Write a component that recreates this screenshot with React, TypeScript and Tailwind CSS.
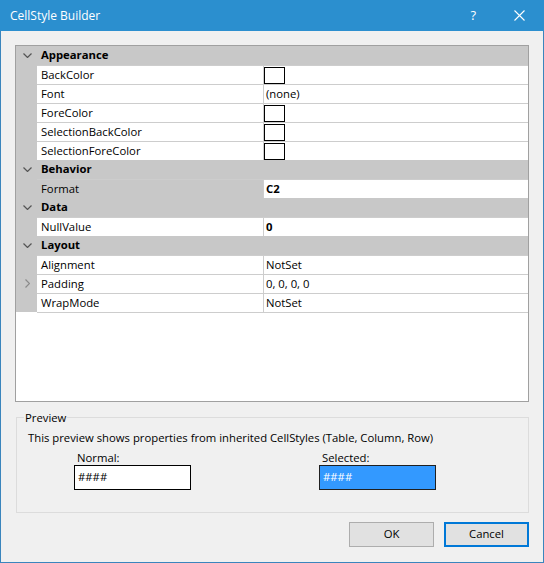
import React from 'react';

type Prop = {name: string; value?: string; swatch?: boolean; bold?: boolean; selected?: boolean; expandable?: boolean};
type Section = {title: string; props: Prop[]};

const sections: Section[] = [
    {
        title: 'Appearance',
        props: [
            {name: 'BackColor', swatch: true},
            {name: 'Font', value: '(none)'},
            {name: 'ForeColor', swatch: true},
            {name: 'SelectionBackColor', swatch: true},
            {name: 'SelectionForeColor', swatch: true},
        ],
    },
    {title: 'Behavior', props: [{name: 'Format', value: 'C2', bold: true, selected: true}]},
    {title: 'Data', props: [{name: 'NullValue', value: '0', bold: true}]},
    {
        title: 'Layout',
        props: [
            {name: 'Alignment', value: 'NotSet'},
            {name: 'Padding', value: '0, 0, 0, 0', expandable: true},
            {name: 'WrapMode', value: 'NotSet'},
        ],
    },
];

function ChevronDown() {
    return (
        <svg width="9" height="5" viewBox="0 0 9 5" className="block">
            <path d="M0.5 0.5 L4.5 4.5 L8.5 0.5" fill="none" stroke="#555" strokeWidth="1.2"/>
        </svg>
    );
}

function ChevronRight() {
    return (
        <svg width="5" height="9" viewBox="0 0 5 9" className="block">
            <path d="M0.5 0.5 L4.5 4.5 L0.5 8.5" fill="none" stroke="#8a8a8a" strokeWidth="1.2"/>
        </svg>
    );
}

function CategoryRow({title}: {title: string}) {
    return (
        <div className="flex h-[19px] items-center bg-[#c8c8c8]">
            <div className="flex w-[21px] justify-center pl-[1px]">
                <ChevronDown/>
            </div>
            <span className="pl-[4px] font-bold">{title}</span>
        </div>
    );
}

function PropRow({p}: {p: Prop}) {
    return (
        <div className="flex h-[19px]">
            <div className="flex w-[21px] items-center justify-center bg-[#c8c8c8] pl-[1px]">
                {p.expandable && <ChevronRight/>}
            </div>
            <div className="flex flex-1 border-t border-[#cdcdcd]">
                <div
                    className={`flex w-[227px] items-center border-r border-[#cdcdcd] pl-[4px] ${p.selected ? 'bg-[#c8c8c8]' : 'bg-white'}`}>
                    {p.name}
                </div>
                <div className="flex flex-1 items-center bg-white">
                    {p.swatch ? (
                        <div className="h-[17px] w-[21px] border border-black bg-white"/>
                    ) : (
                        <span className={`pl-[2px] ${p.bold ? 'font-bold' : ''}`}>{p.value}</span>
                    )}
                </div>
            </div>
        </div>
    );
}

export default function App() {
    return (
        <div
            className="flex h-[563px] w-[544px] flex-col border-x border-b border-[#3a85bd] bg-[#f0f0f0] text-[11.3px] text-black"
            style={{fontFamily: '"Segoe UI", "Open Sans", "Liberation Sans", sans-serif'}}
        >
            {/* title bar */}
            <div className="-mx-px flex h-[31px] shrink-0 items-center bg-[#2b8fcf] pl-[10px] text-white">
                <span className="flex-1 text-[12px]">CellStyle Builder</span>
                <span className="mr-[38px] text-[13px]">?</span>
                <svg width="11" height="11" viewBox="0 0 11 11" className="mr-[19px]">
                    <path d="M0.5 0.5 L10.5 10.5 M10.5 0.5 L0.5 10.5" stroke="white" strokeWidth="1.1"/>
                </svg>
            </div>

            <div className="flex flex-1 flex-col px-[14px] pt-[14px]">
                {/* property grid */}
                <div className="h-[357px] border border-[#a0a0a0] bg-white">
                    {sections.map(s => (
                        <React.Fragment key={s.title}>
                            <CategoryRow title={s.title}/>
                            {s.props.map(p => (
                                <PropRow key={p.name} p={p}/>
                            ))}
                        </React.Fragment>
                    ))}
                    <div className="ml-[21px] border-t border-[#cdcdcd]"/>
                </div>

                {/* preview group */}
                <fieldset className="mt-[8px] ml-px h-[103px] border border-[#dcdcdc] px-[11px]">
                    <legend className="ml-[-4px] px-[1px] leading-[15px]">Preview</legend>
                    <p className="mt-[5px] leading-[16px]">
                        This preview shows properties from inherited CellStyles (Table, Column, Row)
                    </p>
                    <div className="mt-[4px] flex">
                        <div className="ml-[46px] w-[117px]">
                            <div className="pl-[3px] leading-[15px]">Normal:</div>
                            <div
                                className="flex h-[25px] items-center border border-black bg-white pl-[3px]">####
                            </div>
                        </div>
                        <div className="ml-[128px] w-[117px]">
                            <div className="pl-[3px] leading-[15px]">Selected:</div>
                            <div
                                className="flex h-[25px] items-center border border-[#202020] bg-[#3399ff] pl-[3px] text-white">####
                            </div>
                        </div>
                    </div>
                </fieldset>

                {/* buttons */}
                <div className="mt-[9px] flex justify-end gap-[10px]">
                    <button
                        className="h-[25px] w-[85px] border border-[#adadad] bg-[#e1e1e1]">OK
                    </button>
                    <button
                        className="h-[25px] w-[85px] border-2 border-[#0078d7] bg-[#e1e1e1]">Cancel
                    </button>
                </div>
            </div>
        </div>
    );
}
